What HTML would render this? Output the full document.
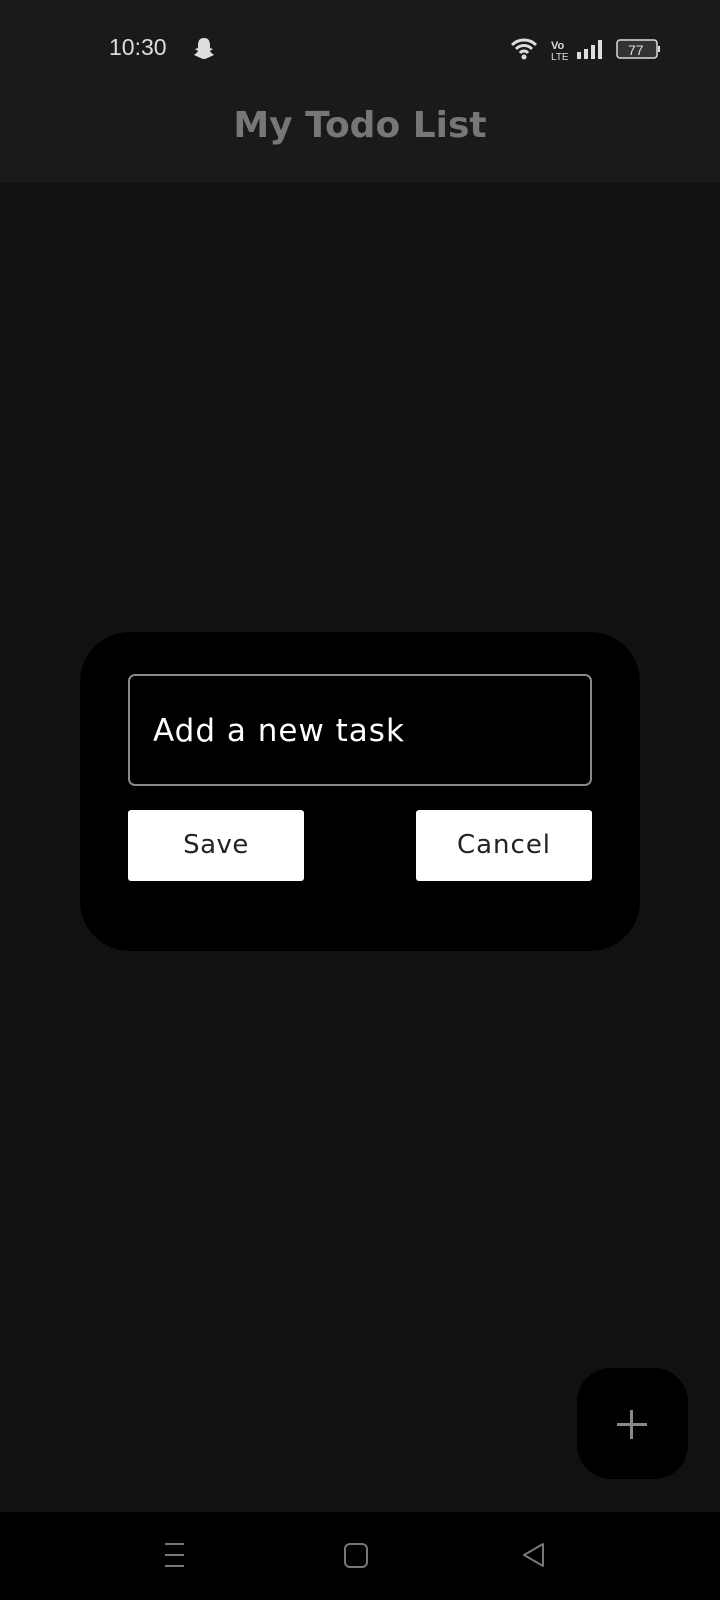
<!DOCTYPE html>
<html><head><style>
body{margin:0;width:720px;height:1600px;background:#111;position:relative;overflow:hidden;font-family:"Liberation Sans",sans-serif}
.hdr{position:absolute;left:0;top:0;width:720px;height:183px;background:#1a1a1a}
.abs{position:absolute}
.dj{font-family:"DejaVu Sans",sans-serif}
</style></head><body>
<div class="hdr"></div>
<div class="abs" style="left:109px;top:34px;color:#ddd;font-size:23px">10:30</div>
<svg class="abs" style="left:193px;top:37px" width="22" height="24" viewBox="0 0 22 24"><path d="M11 1C6 1 5 5 5 8v3L2 12c1 1 2 1 3 2-1 2-3 3-4 4 2 1 3 1 4 2 2 0 3 2 6 2s4-2 6-2c1-1 2-1 4-2-1-1-3-2-4-4 1-1 2-1 3-2l-3-1V8c0-3-1-7-6-7z" fill="#ddd"/></svg>
<svg class="abs" style="left:510px;top:36px" width="150" height="26" viewBox="0 0 150 26">
<path d="M2 9a17 17 0 0 1 24 0M6 13a11 11 0 0 1 16 0M10 17a5 5 0 0 1 8 0" stroke="#ddd" stroke-width="3" fill="none"/><circle cx="14" cy="21" r="2.5" fill="#ddd"/>
<text x="41" y="13" font-size="11" fill="#ddd" font-weight="bold">Vo</text><text x="41" y="24" font-size="10" fill="#ddd">LTE</text>
<rect x="67" y="16" width="4" height="7" fill="#ddd"/><rect x="74" y="13" width="4" height="10" fill="#ddd"/><rect x="81" y="9" width="4" height="14" fill="#ddd"/><rect x="88" y="4" width="4" height="19" fill="#ddd"/>
<rect x="107" y="4" width="40" height="18" rx="3" fill="#333" stroke="#ddd" stroke-width="1.5"/><rect x="148" y="10" width="2" height="6" fill="#ddd"/>
<text x="118" y="19" font-size="14" fill="#ddd">77</text></svg>
<div class="abs dj" style="left:0;width:720px;top:105px;text-align:center;color:#777;font-size:36px;font-weight:bold">My Todo List</div>
<div class="abs" style="left:80px;top:632px;width:560px;height:319px;background:#000;border-radius:50px"></div>
<div class="abs" style="left:128px;top:674px;width:460px;height:108px;border:2px solid #888;border-radius:7px"></div>
<div class="abs dj" style="left:153px;top:713px;color:#fff;font-size:31px;letter-spacing:1px">Add a new task</div>
<div class="abs dj" style="left:128px;top:810px;width:176px;height:71px;background:#fff;border-radius:3px;color:#222;font-size:26px;text-align:center;line-height:71px;letter-spacing:0.5px">Save</div>
<div class="abs dj" style="left:416px;top:810px;width:176px;height:71px;background:#fff;border-radius:3px;color:#222;font-size:26px;text-align:center;line-height:71px;letter-spacing:1px">Cancel</div>
<div class="abs" style="left:577px;top:1368px;width:111px;height:111px;background:#000;border-radius:34px"></div>
<div class="abs" style="left:617px;top:1423px;width:30px;height:3px;background:#888"></div>
<div class="abs" style="left:630px;top:1410px;width:3px;height:29px;background:#888"></div>
<div class="abs" style="left:0;top:1512px;width:720px;height:88px;background:#000"></div>
<svg class="abs" style="left:160px;top:1540px" width="420" height="32" viewBox="0 0 420 32">
<path d="M5 4h19M5 15h19M5 26h19" stroke="#777" stroke-width="2"/>
<rect x="185" y="4" width="22" height="23" rx="5" stroke="#777" stroke-width="2" fill="none"/>
<path d="M383 4L364 15l19 11z" stroke="#777" stroke-width="2" fill="none" stroke-linejoin="round"/></svg>
</body></html>
